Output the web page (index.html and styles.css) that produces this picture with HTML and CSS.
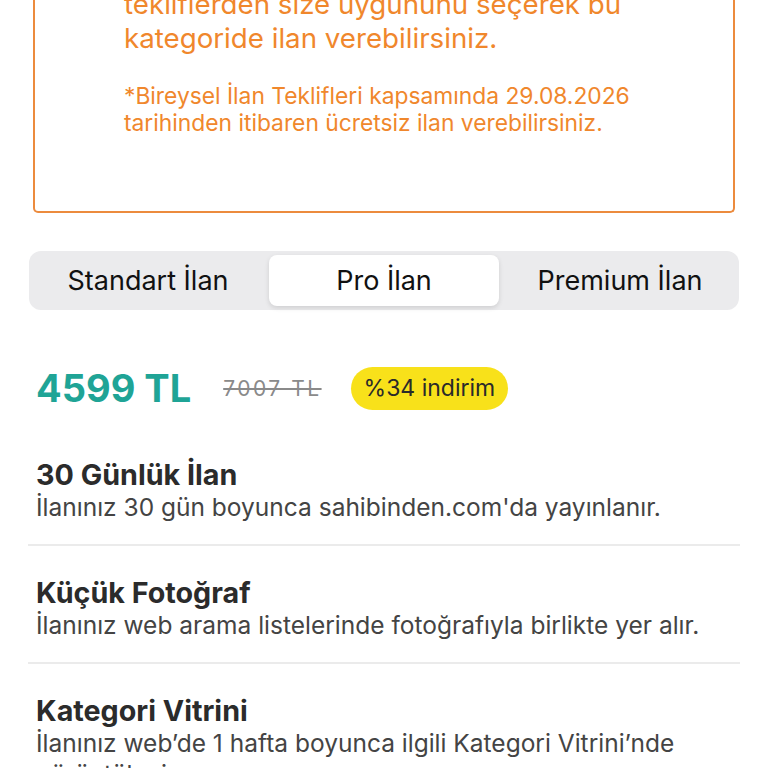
FILE: index.html
```html
<!DOCTYPE html>
<html lang="tr">
<head>
    <meta charset="UTF-8">
    <meta name="viewport" content="width=device-width, initial-scale=1.0">
    <title>İlan Seçenekleri</title>
    <link rel="stylesheet" href="styles.css">
</head>
<body>
    <div class="notice">
        <p class="notice-main">tekliflerden size uygununu seçerek bu<br>kategoride ilan verebilirsiniz.</p>
        <p class="notice-note">*Bireysel İlan Teklifleri kapsamında 29.08.2026<br>tarihinden itibaren ücretsiz ilan verebilirsiniz.</p>
    </div>

    <div class="tabs">
        <div class="tab">Standart İlan</div>
        <div class="tab active">Pro İlan</div>
        <div class="tab">Premium İlan</div>
    </div>

    <div class="price-row">
        <span class="price">4599 TL</span>
        <span class="old-price">7007 TL</span>
        <span class="discount">%34 indirim</span>
    </div>

    <ul class="features">
        <li class="feature">
            <h3>30 Günlük İlan</h3>
            <p>İlanınız 30 gün boyunca sahibinden.com'da yayınlanır.</p>
        </li>
        <li class="feature">
            <h3>Küçük Fotoğraf</h3>
            <p>İlanınız web arama listelerinde fotoğrafıyla birlikte yer alır.</p>
        </li>
        <li class="feature">
            <h3>Kategori Vitrini</h3>
            <p>İlanınız web’de 1 hafta boyunca ilgili Kategori Vitrini’nde görüntülenir.</p>
        </li>
    </ul>
</body>
</html>
```

FILE: styles.css
```css
body {
    font-family: Inter, "Noto Sans", sans-serif;
    margin: 0;
    padding: 0;
    background-color: #fff;
    color: #222;
}
.notice {
    margin: -13px 33px 0;
    border: 2px solid #ec8b3e;
    border-top: none;
    border-radius: 0 0 5px 5px;
    padding: 0 30px 75px 89px;
    color: #f0872c;
}
.notice-main {
    margin: 0;
    font-size: 27.7px;
    line-height: 34px;
}
.notice-note {
    margin: 27px 0 0;
    font-size: 22.8px;
    line-height: 27px;
}
.tabs {
    margin: 38px 29px 0;
    padding: 4px;
    background-color: #ebebed;
    border-radius: 12px;
    display: grid;
    grid-template-columns: 1fr 1fr 1fr;
    gap: 6px;
}
.tab {
    height: 51px;
    display: flex;
    align-items: center;
    justify-content: center;
    font-size: 27px;
    color: #111;
    border-radius: 8px;
}
.tab.active {
    background-color: #fff;
    box-shadow: 0 2px 5px rgba(0, 0, 0, 0.12);
}
.price-row {
    margin: 55px 36px 0;
    height: 46px;
    display: flex;
    align-items: center;
}
.price {
    font-size: 38px;
    font-weight: bold;
    color: #1fa496;
    margin-right: 32px;
}
.old-price {
    font-size: 21px;
    letter-spacing: 2.5px;
    color: #8a8a8a;
    text-decoration: line-through;
    margin-right: 29px;
}
.discount {
    background-color: #f8e11a;
    border-radius: 22px;
    padding: 0 13px;
    height: 43px;
    display: flex;
    align-items: center;
    font-size: 23px;
    color: #2a2a2a;
}
.features {
    list-style: none;
    margin: 47px 28px 0;
    padding: 0;
}
.feature {
    padding: 30px 8px 21px;
    border-bottom: 2px solid #ebebeb;
}
.feature:first-child {
    padding-top: 0;
}
.feature h3 {
    margin: 0;
    font-size: 28.7px;
    line-height: 34px;
    font-weight: bold;
    color: #2b2b2b;
}
.feature p {
    margin: 0;
    font-size: 24.5px;
    line-height: 31px;
    color: #444;
}
```
